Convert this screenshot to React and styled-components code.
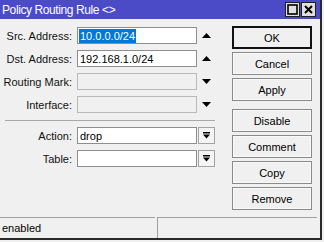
import React from "react";
import styled, { createGlobalStyle } from "styled-components";

const Global = createGlobalStyle`
  html, body { margin: 0; padding: 0; background: #f0f0f0; }
  body {
    font-family: "Liberation Sans", Arial, sans-serif;
    font-size: 11px;
    color: #000;
  }
  * { box-sizing: border-box; }
`;

const Window = styled.div`
  width: 322px;
  height: 240px;
  border-right: 2px solid #2a2a2a;
  border-bottom: 2px solid #2a2a2a;
  background: #f0f0f0;
  display: flex;
  flex-direction: column;
`;

const TitleBar = styled.div`
  height: 19px;
  flex: none;
  background: #4b4bc8;
  color: #fff;
  display: flex;
  align-items: center;
  padding-left: 2px;
  font-size: 12px;
  letter-spacing: -0.4px;
`;

const TitleButtons = styled.div`
  margin-left: auto;
  margin-right: 4px;
  display: flex;
  gap: 1px;
`;

const TitleBtn = styled.div`
  width: 15px;
  height: 15px;
  background: #e0e0e0;
  border: 1px solid #202020;
  display: flex;
  align-items: center;
  justify-content: center;
`;

const Main = styled.div`
  flex: 1;
  display: flex;
  align-items: flex-start;
`;

const Form = styled.div`
  width: 215px;
  padding-top: 8px;
  display: flex;
  flex-direction: column;
`;

const Row = styled.div`
  display: flex;
  align-items: center;
  height: 17px;
  & + & { margin-top: 6px; }
`;

const Label = styled.div`
  width: 72px;
  text-align: right;
  white-space: nowrap;
  color: #111;
`;

const Field = styled.div`
  margin-left: 5px;
  width: 120px;
  height: 17px;
  border: 1px solid ${(p) => (p.$disabled ? "#b9b9b9" : "#8e8e8e")};
  background: ${(p) => (p.$disabled ? "#f0f0f0" : "#fff")};
  display: flex;
  align-items: center;
  padding-left: 1px;
  white-space: nowrap;
  overflow: hidden;
`;

const Value = styled.span`
  padding-left: 1px;
`;

const Selected = styled.span`
  background: #0078d7;
  color: #fff;
  line-height: 14px;
  padding: 0 1px;
`;

const Side = styled.div`
  width: 17px;
  height: 17px;
  margin-left: 1px;
  display: flex;
  align-items: center;
  justify-content: center;
`;

const DropBtn = styled(Side)`
  border: 1px solid #a3a3a3;
  background: #f4f4f4;
`;

const Separator = styled.div`
  margin: 7px 0 6px 5px;
  width: 210px;
  height: 1px;
  background: #a8a8a8;
`;

const Buttons = styled.div`
  margin-left: 17px;
  width: 80px;
  padding-top: 7px;
  display: flex;
  flex-direction: column;
  gap: 3px;
`;

const Button = styled.div`
  height: 23px;
  border: ${(p) => (p.$default ? "2px solid #111" : "1px solid #8a8a8a")};
  background: #f0f0f0;
  box-shadow: ${(p) => (p.$default ? "none" : "inset 0 0 0 1px #f8f8f8")};
  display: flex;
  align-items: center;
  justify-content: center;
  margin-top: ${(p) => (p.$gapBefore ? "5px" : "0")};
`;

const StatusBar = styled.div`
  height: 21px;
  flex: none;
  display: flex;
`;

const StatusPanel = styled.div`
  width: ${(p) => p.$w}px;
  margin-left: ${(p) => (p.$first ? 0 : 2)}px;
  border-top: 1px solid #a0a0a0;
  border-left: ${(p) => (p.$first ? "none" : "1px solid #a0a0a0")};
  display: flex;
  align-items: center;
  padding-left: 2px;
`;

const UpArrow = () => (
  <svg width="9" height="5" viewBox="0 0 9 5">
    <polygon points="0,5 9,5 4.5,0" fill="#000" />
  </svg>
);

const DownArrow = () => (
  <svg width="9" height="5" viewBox="0 0 9 5">
    <polygon points="0,0 9,0 4.5,5" fill="#000" />
  </svg>
);

const DropIcon = () => (
  <svg width="7" height="7" viewBox="0 0 7 7">
    <rect x="0" y="0" width="7" height="1.5" fill="#000" />
    <polygon points="0,2.5 7,2.5 3.5,6.5" fill="#000" />
  </svg>
);

const MaxIcon = () => (
  <svg width="11" height="11" viewBox="0 0 11 11">
    <rect x="1" y="1" width="9" height="9" fill="none" stroke="#000" strokeWidth="1.6" />
  </svg>
);

const CloseIcon = () => (
  <svg width="11" height="11" viewBox="0 0 11 11">
    <path d="M2 2 L9 9 M9 2 L2 9" stroke="#000" strokeWidth="2" />
  </svg>
);

export default function App() {
  return (
    <>
      <Global />
      <Window>
        <TitleBar>
          Policy Routing Rule &lt;&gt;
          <TitleButtons>
            <TitleBtn><MaxIcon /></TitleBtn>
            <TitleBtn><CloseIcon /></TitleBtn>
          </TitleButtons>
        </TitleBar>
        <Main>
          <Form>
            <Row>
              <Label>Src. Address:</Label>
              <Field><Selected>10.0.0.0/24</Selected></Field>
              <Side><UpArrow /></Side>
            </Row>
            <Row>
              <Label>Dst. Address:</Label>
              <Field><Value>192.168.1.0/24</Value></Field>
              <Side><UpArrow /></Side>
            </Row>
            <Row>
              <Label>Routing Mark:</Label>
              <Field $disabled />
              <Side><DownArrow /></Side>
            </Row>
            <Row>
              <Label>Interface:</Label>
              <Field $disabled />
              <Side><DownArrow /></Side>
            </Row>
            <Separator />
            <Row>
              <Label>Action:</Label>
              <Field><Value>drop</Value></Field>
              <DropBtn><DropIcon /></DropBtn>
            </Row>
            <Row>
              <Label>Table:</Label>
              <Field />
              <DropBtn><DropIcon /></DropBtn>
            </Row>
          </Form>
          <Buttons>
            <Button $default>OK</Button>
            <Button>Cancel</Button>
            <Button>Apply</Button>
            <Button $gapBefore>Disable</Button>
            <Button>Comment</Button>
            <Button>Copy</Button>
            <Button>Remove</Button>
          </Buttons>
        </Main>
        <StatusBar>
          <StatusPanel $first $w={155}>enabled</StatusPanel>
          <StatusPanel $w={160} />
        </StatusBar>
      </Window>
    </>
  );
}
